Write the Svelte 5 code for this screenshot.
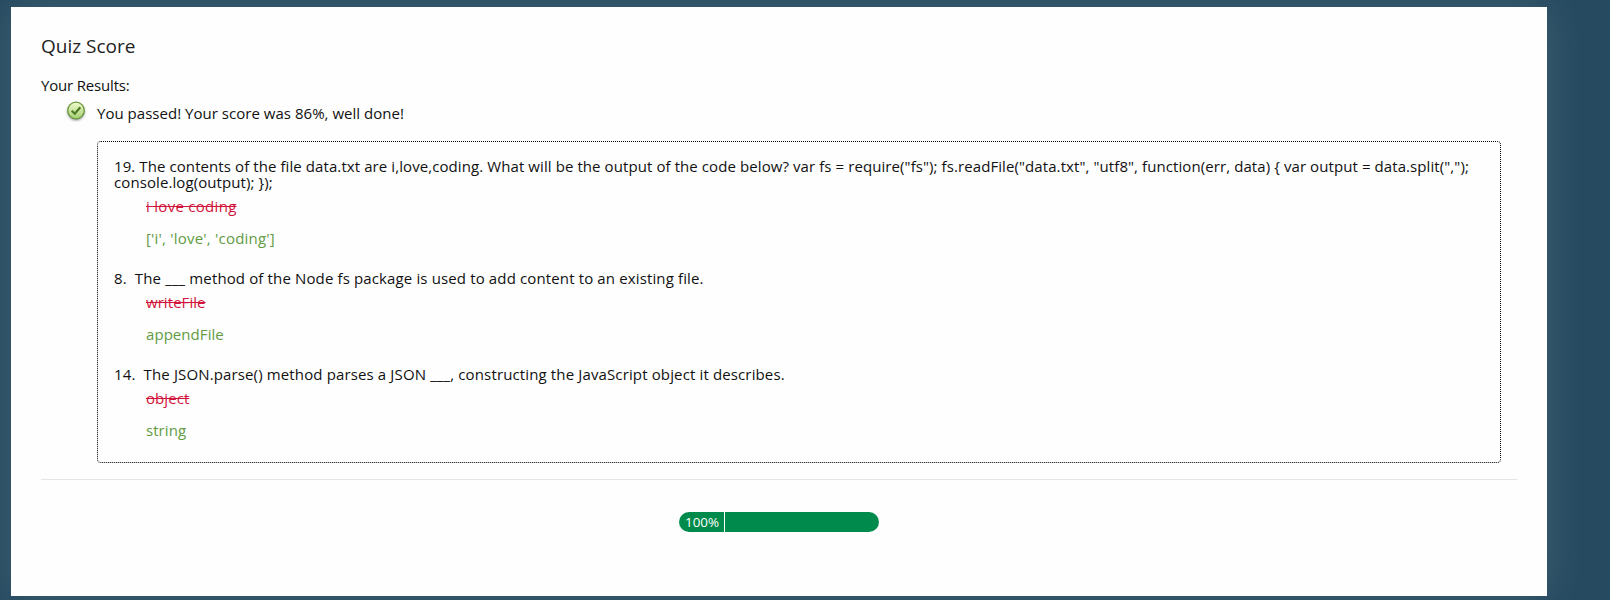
<script>
  const questions = [
    {
      text: '19. The contents of the file data.txt are i,love,coding. What will be the output of the code below? var fs = require("fs"); fs.readFile("data.txt", "utf8", function(err, data) { var output = data.split(","); console.log(output); });',
      wrong: 'i love coding',
      right: "['i', 'love', 'coding']",
      kind: 'code'
    },
    {
      text: '8.\u00a0 The ___ method of the Node fs package is used to add content to an existing file.',
      wrong: 'writeFile',
      right: 'appendFile',
      kind: 'blank'
    },
    {
      text: '14.\u00a0 The JSON.parse() method parses a JSON ___, constructing the JavaScript object it describes.',
      wrong: 'object',
      right: 'string',
      kind: 'blank'
    }
  ];
  const progress = 100;
</script>

<main class="panel">
  <h1>Quiz Score</h1>
  <p class="label">Your Results:</p>
  <section class="result">
    <div class="status">
      <svg class="check" width="22" height="22" viewBox="0 0 22 22" aria-hidden="true">
        <defs>
          <linearGradient id="face" x1="0" y1="0" x2="0" y2="1">
            <stop offset="0" stop-color="#f4fbcf" />
            <stop offset="1" stop-color="#a2d06e" />
          </linearGradient>
          <filter id="soft" x="-20%" y="-20%" width="140%" height="140%">
            <feGaussianBlur stdDeviation="0.8" />
          </filter>
        </defs>
        <circle cx="11" cy="11.8" r="8.8" fill="#444" opacity=".55" filter="url(#soft)" />
        <circle cx="11" cy="10.5" r="8.3" fill="url(#face)" stroke="#689a3d" stroke-width="1.3" />
        <path d="M6.7 10.8 L9.8 13.7 L15.3 7.2" fill="none" stroke="#4c7b26" stroke-width="2.2" />
      </svg>
      <p class="passed">You passed! Your score was 86%, well done!</p>
    </div>
    <div class="review">
      {#each questions as q}
        <article class={q.kind}>
          <p class="question">{q.text}</p>
          <p class="wrong">{q.wrong}</p>
          <p class="right">{q.right}</p>
        </article>
      {/each}
    </div>
  </section>
  <hr />
  <div class="progress"><span class="value">{progress}%</span></div>
</main>

<style>
  :global(body) {
    background: #264a60;
    overflow: hidden;
  }
  :global(#app) {
    display: flow-root;
  }
  .panel {
    box-sizing: border-box;
    width: 1536px;
    height: 589px;
    margin: 7px 0 4px 11px;
    padding: 27px 30px 0;
    background: #fefefe;
    box-shadow: 0 0 40px rgba(255, 255, 255, 0.13);
    color: #111;
    font: 15px/20px "Open Sans", sans-serif;
  }
  h1,
  p {
    margin: 0;
    font-weight: 400;
  }
  h1 {
    font-size: 19px;
    line-height: 24px;
    color: #222;
  }
  .label {
    margin-top: 17px;
    letter-spacing: -0.18px;
  }
  .result {
    margin: 8px 16px 0 24px;
  }
  .status {
    display: grid;
    grid-template-columns: 32px 1fr;
    height: 20px;
  }
  .check {
    margin-top: -3px;
  }
  .passed {
    letter-spacing: 0.026px;
  }
  .review {
    display: grid;
    gap: 24px;
    margin: 18px 0 0 32px;
    padding: 16px 16px 24px;
    border: 1px dotted #000;
    border-radius: 4px;
    line-height: 16px;
  }
  .question {
    letter-spacing: 0.135px;
  }
  .code .question {
    letter-spacing: 0.087px;
  }
  .wrong,
  .right {
    width: max-content;
    margin-left: 32px;
    letter-spacing: 0.06px;
  }
  .wrong {
    margin-top: 8px;
    color: #d2143a;
    text-decoration: line-through;
    text-decoration-thickness: 1px;
  }
  .right {
    margin-top: 16px;
    color: #629b43;
  }
  .code .wrong {
    letter-spacing: 0.29px;
  }
  .code .right {
    letter-spacing: 0.21px;
  }
  hr {
    height: 1px;
    margin: 16px 0 32px;
    border: 0;
    background: #e5e5e5;
  }
  .progress {
    display: flex;
    width: 200px;
    height: 20px;
    margin: 0 auto;
    overflow: hidden;
    border-radius: 10px;
    background: #008a4b;
  }
  .value {
    box-sizing: border-box;
    width: 46px;
    padding-left: 6px;
    border-right: 1px solid #fff;
    color: #fff;
    font-size: 13.4px;
  }
</style>
